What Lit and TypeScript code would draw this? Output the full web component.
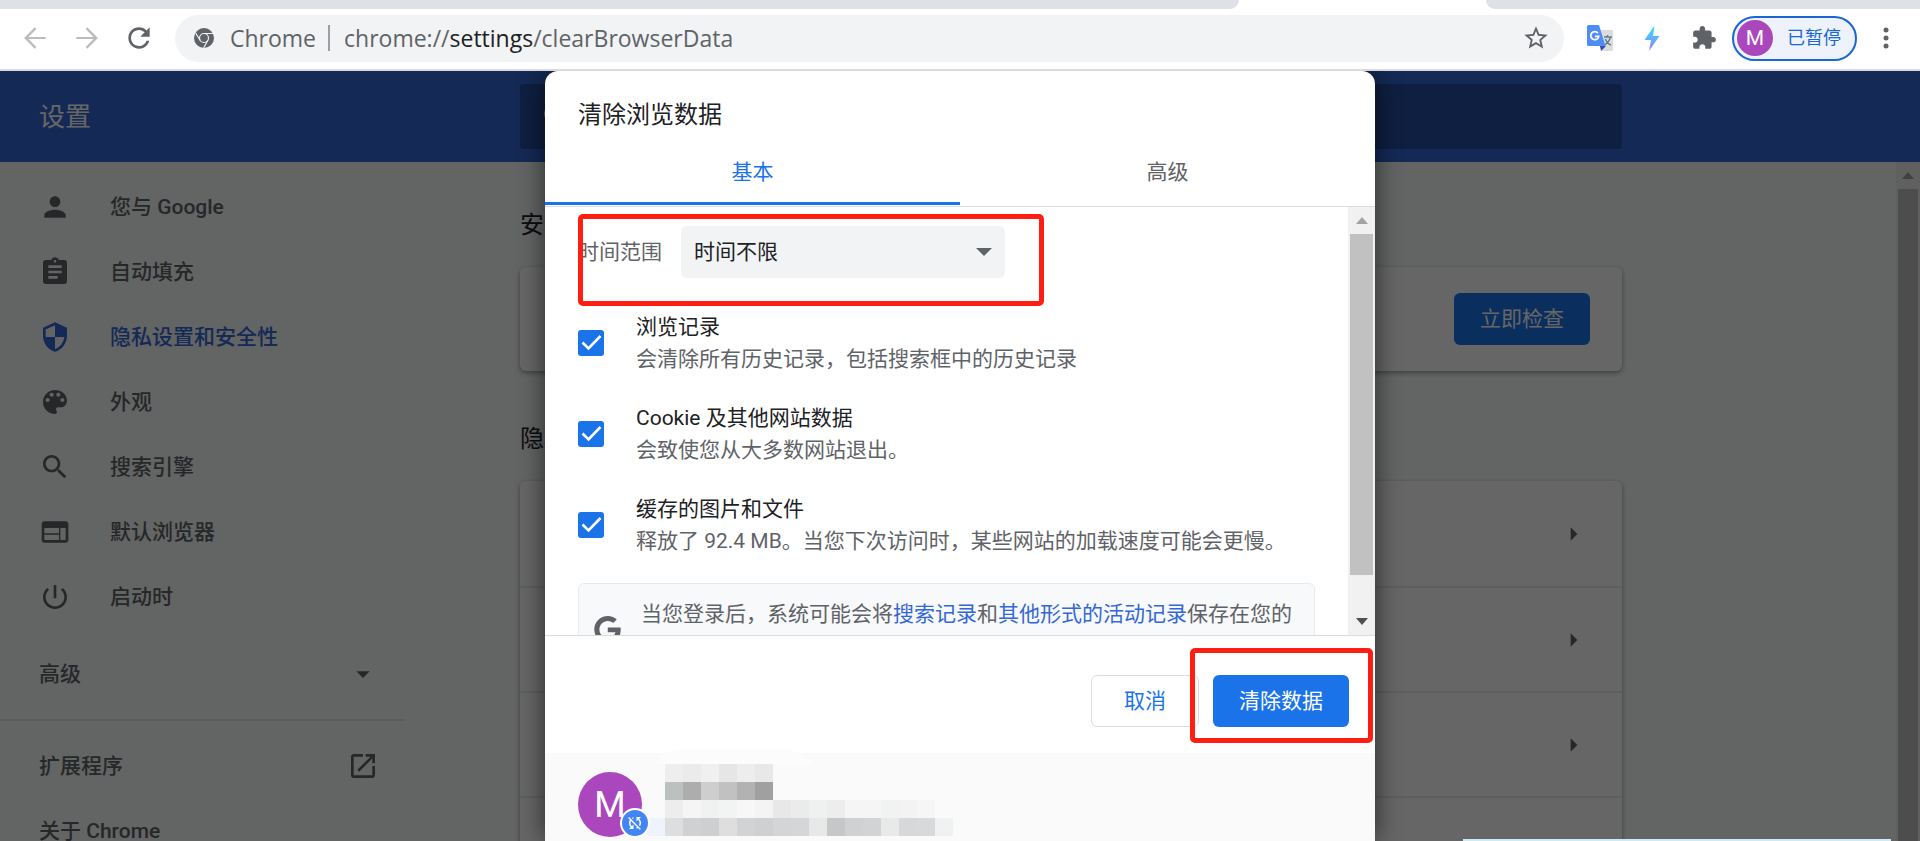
import { LitElement, html, css, svg } from "lit";
import { customElement, property } from "lit/decorators.js";

const ICONS: Record<string, string> = {
  person: "M12 12c2.21 0 4-1.79 4-4s-1.79-4-4-4-4 1.79-4 4 1.79 4 4 4zm0 2c-2.67 0-8 1.34-8 4v2h16v-2c0-2.66-5.33-4-8-4z",
  assignment: "M19 3h-4.18C14.4 1.84 13.3 1 12 1c-1.3 0-2.4.84-2.82 2H5c-1.1 0-2 .9-2 2v14c0 1.1.9 2 2 2h14c1.1 0 2-.9 2-2V5c0-1.1-.9-2-2-2zm-7 0c.55 0 1 .45 1 1s-.45 1-1 1-1-.45-1-1 .45-1 1-1zm2 14H7v-2h7v2zm3-4H7v-2h10v2zm0-4H7V7h10v2z",
  security: "M12 1L3 5v6c0 5.55 3.84 10.74 9 12 5.16-1.26 9-6.45 9-12V5l-9-4zm0 10.99h7c-.53 4.12-3.28 7.79-7 8.94V12H5V6.3l7-3.11v8.8z",
  palette: "M12 3c-4.97 0-9 4.03-9 9s4.03 9 9 9c.83 0 1.5-.67 1.5-1.5 0-.39-.15-.74-.39-1.01-.23-.26-.38-.61-.38-.99 0-.83.67-1.5 1.5-1.5H16c2.76 0 5-2.24 5-5 0-4.42-4.03-8-9-8zm-5.5 9c-.83 0-1.5-.67-1.5-1.5S5.67 9 6.5 9 8 9.67 8 10.5 7.33 12 6.5 12zm3-4C8.67 8 8 7.33 8 6.5S8.67 5 9.5 5s1.5.67 1.5 1.5S10.33 8 9.5 8zm5 0c-.83 0-1.5-.67-1.5-1.5S13.67 5 14.5 5s1.5.67 1.5 1.5S15.33 8 14.5 8zm3 4c-.83 0-1.5-.67-1.5-1.5S16.67 9 17.5 9s1.5.67 1.5 1.5-.67 1.5-1.5 1.5z",
  search: "M15.5 14h-.79l-.28-.27C15.41 12.59 16 11.11 16 9.5 16 5.91 13.09 3 9.5 3S3 5.91 3 9.5 5.91 16 9.5 16c1.61 0 3.09-.59 4.23-1.57l.27.28v.79l5 4.99L20.49 19l-4.99-5zm-6 0C7.01 14 5 11.99 5 9.5S7.01 5 9.5 5 14 7.01 14 9.5 11.99 14 9.5 14z",
  web: "M20 4H4c-1.1 0-1.99.9-1.99 2L2 18c0 1.1.9 2 2 2h16c1.1 0 2-.9 2-2V6c0-1.1-.9-2-2-2zm-5 14H4v-4h11v4zm0-5H4V9h11v4zm5 5h-4V9h4v9z",
  power: "M13 3h-2v10h2V3zm4.83 2.17l-1.42 1.42C17.99 7.86 19 9.81 19 12c0 3.87-3.13 7-7 7s-7-3.13-7-7c0-2.19 1.01-4.14 2.58-5.42L6.17 5.17C4.23 6.82 3 9.26 3 12c0 4.97 4.03 9 9 9s9-4.03 9-9c0-2.74-1.23-5.18-3.17-6.83z",
  launch: "M19 19H5V5h7V3H5c-1.11 0-2 .9-2 2v14c0 1.1.89 2 2 2h14c1.1 0 2-.9 2-2v-7h-2v7zM14 3v2h3.59l-9.83 9.83 1.41 1.41L19 6.41V10h2V3h-7z",
  extension: "M20.5 11H19V7c0-1.1-.9-2-2-2h-4V3.5C13 2.12 11.88 1 10.5 1S8 2.12 8 3.5V5H4c-1.1 0-1.99.9-1.99 2v3.8H3.5c1.49 0 2.7 1.21 2.7 2.7s-1.21 2.7-2.7 2.7H2V20c0 1.1.9 2 2 2h3.8v-1.5c0-1.49 1.21-2.7 2.7-2.7 1.49 0 2.7 1.21 2.7 2.7V22H17c1.1 0 2-.9 2-2v-4h1.5c1.38 0 2.5-1.12 2.5-2.5S21.88 11 20.5 11z",
  star: "M22 9.24l-7.19-.62L12 2 9.19 8.63 2 9.24l5.46 4.73L5.82 21 12 17.27 18.18 21l-1.63-7.03L22 9.24zM12 15.4l-3.76 2.27 1-4.28-3.32-2.88 4.38-.38L12 6.1l1.71 4.04 4.38.38-3.32 2.88 1 4.28L12 15.4z",
  back: "M20 11.2H7.1l5.9-5.9L11.8 4l-8 8 8 8 1.2-1.3-5.9-5.9H20z",
  forward: "M4 11.2h12.9L11 5.3 12.2 4l8 8-8 8-1.2-1.3 5.9-5.9H4z",
  reload: "M17.65 6.35C16.2 4.9 14.21 4 12 4c-4.42 0-7.99 3.58-7.99 8s3.57 8 7.99 8c3.73 0 6.84-2.55 7.73-6h-2.08c-.82 2.33-3.04 4-5.65 4-3.31 0-6-2.69-6-6s2.69-6 6-6c1.66 0 3.14.69 4.22 1.78L13 11h7V4l-2.35 2.35z",
  syncOff: "M10 6.35V4.26c-.8.21-1.55.54-2.23.96l1.46 1.46c.25-.12.5-.24.77-.33zm-7.14-.94l2.36 2.36C4.45 8.99 4 10.44 4 12c0 2.21.91 4.2 2.36 5.64L4 20h6v-6l-2.24 2.24C6.68 15.15 6 13.66 6 12c0-1 .25-1.94.68-2.77l8.08 8.08c-.25.13-.5.25-.77.34v2.09c.8-.21 1.55-.54 2.23-.96l2.36 2.36 1.27-1.27L4.14 4.14 2.86 5.41zM20 4h-6v6l2.24-2.24C17.32 8.85 18 10.34 18 12c0 1-.25 1.94-.68 2.77l1.46 1.46C19.55 15.01 20 13.56 20 12c0-2.21-.91-4.2-2.36-5.64L20 4z",
  down: "M7 10l5 5 5-5z",
  right: "M9.5 7l5 5-5 5z",
  google: "M12.24 10.285V14.4h6.806c-.275 1.765-2.056 5.174-6.806 5.174-4.095 0-7.439-3.389-7.439-7.574s3.345-7.574 7.439-7.574c2.33 0 3.891.989 4.785 1.849l3.254-3.138C18.189 1.186 15.479 0 12.24 0c-6.635 0-12 5.365-12 12s5.365 12 12 12c6.926 0 11.52-4.869 11.52-11.726 0-.788-.085-1.39-.189-1.989H12.24z",
};

const icon = (name: string, size = 32) => html`<svg
  width=${size} height=${size} viewBox="0 0 24 24" fill="currentColor" aria-hidden="true"
><path d=${ICONS[name]}></path></svg>`;

const base = css`
  * { box-sizing: border-box; }
  svg { display: block; flex: none; }
  button, select, input { font: inherit; color: inherit; margin: 0; }
  button { border: 0; background: none; padding: 0; cursor: pointer; }
  a { color: inherit; text-decoration: none; }
`;

@customElement("browser-toolbar")
class BrowserToolbar extends LitElement {
  static styles = [base, css`
    :host { display: block; flex: none; }
    .strip { display: flex; height: 9px; background: #fff; }
    .strip-left { flex: 1; background: #dee1e6; border-bottom-right-radius: 9px; }
    .strip-tab { width: 247px; }
    .strip-right { width: 434px; background: #dee1e6; border-bottom-left-radius: 9px; }
    .bar {
      display: flex; align-items: center; height: 62px; padding: 0 8px 2px 9px;
      background: #fff; border-bottom: 2px solid #d9dbdb; color: #5f6368;
    }
    .tool { display: flex; justify-content: center; align-items: center; width: 52px; height: 44px; }
    .off { color: #babcbe; }
    .omnibox {
      flex: 1; display: flex; align-items: center; height: 47px; margin: 0 10px;
      padding: 0 14px 0 19px; border-radius: 24px; background: #f1f3f4;
      font: 23px/32px "Open Sans", "Noto Sans", sans-serif; color: #5f6368;
    }
    .site { margin-left: 16px; }
    .rule { width: 2px; height: 26px; margin: 0 14px 0 12px; background: #9aa0a6; }
    .url { flex: 1; }
    .url b { font-weight: 400; color: #202124; }
    .profile {
      display: flex; align-items: center; gap: 14px; height: 45px; margin: 0 3px 0 2px; padding: 0 14px 0 3px;
      border: 2px solid #1a66d2; border-radius: 23px; background: #edf2fb;
      font: 18px/24px Roboto, "Noto Sans CJK SC", sans-serif; color: #1a66d2;
    }
    .avatar {
      display: flex; align-items: center; justify-content: center; width: 36px; height: 36px;
      border-radius: 50%; background: #ab47bc; color: #fff; font-size: 21px;
    }
  `];

  render() {
    return html`
      <div class="strip"><div class="strip-left"></div><div class="strip-tab"></div><div class="strip-right"></div></div>
      <div class="bar">
        <button class="tool off" aria-label="后退">${icon("back")}</button>
        <button class="tool off" aria-label="前进">${icon("forward")}</button>
        <button class="tool" aria-label="重新加载">${icon("reload")}</button>
        <div class="omnibox">
          <svg width="20" height="20" viewBox="0 0 20 20" aria-hidden="true">
            <circle cx="10" cy="10" r="10" fill="#5f6368"></circle>
            <g fill="none" stroke="#f1f3f4" stroke-width="1.2">
              <circle cx="10" cy="10" r="4.5"></circle>
              <path d="M10 5.5h9M6.1 12.2L1.6 5M13.9 12.2L9.6 20"></path>
            </g>
          </svg>
          <span class="site">Chrome</span><span class="rule"></span>
          <span class="url">chrome://<b>settings</b>/clearBrowserData</span>
          <button aria-label="收藏">${icon("star", 28)}</button>
        </div>
        <button class="tool" aria-label="翻译">
          <svg width="28" height="28" viewBox="0 0 28 28" aria-hidden="true">
            <path d="M13 6h12.500a1.500 1.500 0 0 1 1.500 1.500v18a1.500 1.500 0 0 1-1.500 1.500H16z" fill="#dcdcdc"></path>
            <path d="M18 13h8M21.500 11v2M24.500 13c-1 4-3 6-6 8M19.500 15c1 3 2.500 5 5.500 6" stroke="#607d8b" stroke-width="1.400" fill="none"></path>
            <path d="M14 22h6l-5 5z" fill="#3749ab"></path>
            <path d="M2.500 1H13l6.500 21h-17A1.500 1.500 0 0 1 1 20.500v-18A1.500 1.500 0 0 1 2.500 1z" fill="#4f8df6"></path>
            <path d="M12 9.300A4 4 0 1 0 12.700 12.300H9" stroke="#fff" stroke-width="1.800" fill="none"></path>
          </svg>
        </button>
        <button class="tool" aria-label="闪电">
          <svg width="28" height="28" viewBox="0 0 28 28" aria-hidden="true">
            <defs><linearGradient id="bolt" x1="0" y1="0" x2="0" y2="1">
              <stop offset="0" stop-color="#1ee8f7"></stop><stop offset="1" stop-color="#a77bff"></stop>
            </linearGradient></defs>
            <path d="M16.500 1.500L6.500 16H13l-2 11 10.500-15H15z" fill="url(#bolt)"></path>
          </svg>
        </button>
        <button class="tool" aria-label="扩展程序">${icon("extension", 26)}</button>
        <button class="profile"><span class="avatar">M</span>已暂停</button>
        <button class="tool" aria-label="菜单">
          <svg width="6" height="24" viewBox="0 0 6 24" fill="currentColor" aria-hidden="true">
            <circle cx="3" cy="4" r="2.500"></circle><circle cx="3" cy="12" r="2.500"></circle><circle cx="3" cy="20" r="2.500"></circle>
          </svg>
        </button>
      </div>`;
  }
}

@customElement("scroll-rail")
class ScrollRail extends LitElement {
  @property({ type: Number }) thumb = 1;
  @property({ type: Boolean }) open = false;
  static styles = [base, css`
    :host { display: flex; flex-direction: column; flex: none; background: #f1f1f1; }
    .end { display: flex; justify-content: center; align-items: center; height: 27px; color: #a3a3a3; }
    .low { color: #505050; }
    .track { flex: 1; padding: 0 2px; }
    .thumb { background: #c1c1c1; }
  `];
  render() {
    return html`
      <div class="end"><svg width="12" height="7" viewBox="0 0 12 7"><path d="M0 7l6-7 6 7z" fill="currentColor"></path></svg></div>
      <div class="track"><div class="thumb" style="height:${this.thumb * 100}%"></div></div>
      ${this.open ? "" : html`<div class="end low"><svg width="12" height="7" viewBox="0 0 12 7"><path d="M0 0l6 7 6-7z" fill="currentColor"></path></svg></div>`}`;
  }
}

const NAV = [
  ["person", "您与 Google"],
  ["assignment", "自动填充"],
  ["security", "隐私设置和安全性"],
  ["palette", "外观"],
  ["search", "搜索引擎"],
  ["web", "默认浏览器"],
  ["power", "启动时"],
];

@customElement("settings-page")
class SettingsPage extends LitElement {
  static styles = [base, css`
    :host {
      display: flex; flex-direction: column; height: 100%; background: #f8faf9;
      font: 21px/32px Roboto, "Noto Sans CJK SC", sans-serif; color: #5f6368;
    }
    .header { display: flex; align-items: center; flex: none; height: 91px; padding: 0 298px 0 39px; background: #3367d6; color: #fff; }
    .title { width: 481px; margin: 0; font-size: 26px; font-weight: 400; }
    .search { flex: 1; display: flex; align-items: center; height: 65px; padding: 0 20px; border-radius: 4px; background: #274ea3; }
    .search input { flex: 1; border: 0; outline: 0; background: none; }
    .body { flex: 1; display: flex; min-height: 0; overflow: hidden; }
    .side { flex: none; width: 405px; padding-top: 12px; font-weight: 500; color: #5f6368; }
    .side a, .more { display: flex; align-items: center; width: 100%; height: 65px; padding: 0 26px 0 39px; }
    .side .plain { justify-content: space-between; }
    .nav a { gap: 39px; }
    .nav .current { color: #3367d6; }
    .more { justify-content: space-between; margin: 12px 0 13px; font-weight: 500; }
    .foot { padding-top: 12px; border-top: 2px solid #e4e6e5; }
    .main { flex: 1; padding: 47px 274px 0 115px; }
    h2 { margin: 0 0 26px; font-size: 24px; line-height: 32px; font-weight: 400; color: #202124; }
    .card { margin-bottom: 52px; border-radius: 6px; background: #fff; box-shadow: 0 2px 5px rgba(60, 64, 67, .5); }
    .check { display: flex; justify-content: flex-end; align-items: center; height: 104px; padding: 0 32px; }
    .check button { height: 52px; padding: 0 26px; border-radius: 6px; background: #1a73e8; color: #fff; }
    .row { display: flex; justify-content: flex-end; align-items: center; width: 100%; height: 105px; padding: 0 32px; }
    .row + .row { border-top: 2px solid #e9ebea; }
    scroll-rail { width: 24px; }
  `];

  render() {
    return html`
      <header class="header">
        <h1 class="title">设置</h1>
        <div class="search">${icon("search")}<input type="search" aria-label="在设置中搜索" /></div>
      </header>
      <div class="body">
        <aside class="side">
          <nav class="nav">
            ${NAV.map(([glyph, label], i) => html`<a href="#" class=${i === 2 ? "current" : ""}>${icon(glyph)}<span>${label}</span></a>`)}
          </nav>
          <button class="more"><span>高级</span>${icon("down")}</button>
          <div class="foot">
            <a class="plain" href="#"><span>扩展程序</span>${icon("launch")}</a>
            <a class="plain" href="#"><span>关于 Chrome</span></a>
          </div>
        </aside>
        <main class="main">
          <h2>安全检查</h2>
          <div class="card check"><button>立即检查</button></div>
          <h2>隐私设置和安全性</h2>
          <div class="card">
            ${["清除浏览数据", "Cookie 及其他网站数据", "安全", "网站设置"].map((name) => html`<button class="row" aria-label=${name}>${icon("right")}</button>`)}
          </div>
        </main>
        <scroll-rail open .thumb=${1}></scroll-rail>
      </div>`;
  }
}

const DATA_TYPES = [
  ["浏览记录", "会清除所有历史记录，包括搜索框中的历史记录"],
  ["Cookie 及其他网站数据", "会致使您从大多数网站退出。"],
  ["缓存的图片和文件", "释放了 92.4 MB。当您下次访问时，某些网站的加载速度可能会更慢。"],
];

// Pixelated name and address, one string of colours per row of 18px tiles.
const TILES = [
  ", eeeeee,ebebeb,f0f0f0,e6e6e6,ededed,e8e8e8",
  ",bcc0be,adadad,cecece,c1c1c1,b2b2b2,a0a0a0",
  ",ededed,f5f5f5,f0f2f1,f2f3f3,f7f7f7,f4f4f4,e8e8e8,ebebeb,eef1f0,ededed,f5f5f5,f5f5f5,f1f2f2,f3f3f3,f6f6f6",
  "eff3fb,dddee0,d0d1d3,cdcfd0,dededf,d2d3d5,cfd0d2,d4d5d7,d5d6d8,e7e9e8,c6c7c9,d0d1d3,d2d3d5,e8eae9,d7d8da,d8d9db,f0f2f1",
].map((row) => row.split(",").map((c) => c.trim()));

@customElement("clear-dialog")
class ClearDialog extends LitElement {
  static styles = [base, css`
    :host {
      display: flex; flex-direction: column; background: #fff; border-radius: 13px 13px 0 0;
      box-shadow: 0 0 26px rgba(0, 0, 0, .6);
      font: 21px/32px Roboto, "Noto Sans CJK SC", sans-serif; color: #202124;
    }
    h2 { margin: 0; padding: 28px 33px 0; font-size: 24px; line-height: 32px; font-weight: 400; }
    .tabs { display: flex; padding-bottom: 1px; border-bottom: 1px solid #dcdcdc; }
    .tab { flex: 1; height: 74px; padding-top: 10px; border-bottom: 3px solid transparent; color: #5f6368; }
    .tab.active { border-color: #1a73e8; color: #1a73e8; }
    .body { display: flex; max-height: 429px; overflow: hidden; border-bottom: 1px solid #dcdcdc; }
    .content { flex: 1; height: max-content; padding: 19px 33px 26px; }
    .range { display: flex; align-items: center; gap: 19px; margin-bottom: 33px; color: #5f6368; }
    .pick { display: grid; align-items: center; width: 324px; color: #5f6368; }
    .pick > * { grid-area: 1 / 1; }
    .pick select {
      appearance: none; height: 52px; padding: 0 13px; border: 0; border-radius: 6px;
      background: #f1f3f4; color: #202124;
    }
    .pick svg { justify-self: end; margin-right: 4px; pointer-events: none; }
    .types { display: grid; gap: 27px; margin-bottom: 26px; }
    .type { display: flex; align-items: center; gap: 32px; }
    .box { display: grid; flex: none; }
    .box > * { grid-area: 1 / 1; }
    .box input { appearance: none; width: 26px; height: 26px; border-radius: 3px; background: #fff; border: 2px solid #5f6368; }
    .box input:checked { background: #1a73e8; border: 0; }
    .box svg { pointer-events: none; }
    .name, .note { display: block; }
    .note { color: #5f6368; }
    .info {
      display: grid; grid-template-columns: auto 1fr; align-items: center; gap: 20px; height: 92px; padding: 14px 20px 14px 15px;
      border: 1px solid #e8eaed; border-radius: 6px; background: #f8f9fb; color: #5f6368;
    }
    .info a { color: #3367d6; }
    .info p { display: flex; align-self: start; margin: 0; white-space: nowrap; }
    scroll-rail { width: 27px; }
    .actions { display: flex; justify-content: flex-end; gap: 14px; padding: 39px 26px 26px; }
    .actions button { height: 52px; border-radius: 6px; }
    .actions .cancel { padding: 0 32px; border: 1px solid #dadce0; color: #1a73e8; }
    .actions .confirm { padding: 0 26px; background: #1a73e8; color: #fff; }
    .account { flex: 1; display: flex; align-items: flex-start; gap: 5px; padding: 11px 33px 0; background: #fafafa; }
    .avatar {
      position: relative; display: flex; justify-content: center; align-items: center; flex: none;
      width: 64px; height: 65px; margin-top: 8px; border-radius: 50%;
      background: #ab47bc; color: #fff; font-size: 36px;
    }
    .badge {
      position: absolute; right: -8px; bottom: -1px; display: flex; justify-content: center; align-items: center;
      width: 30px; height: 30px; border: 2px solid #fff; border-radius: 50%; background: #4285f4;
    }
    .tiles { overflow: visible; }
    .mark { position: absolute; border: 5px solid #ff1f12; border-radius: 5px; pointer-events: none; }
    .mark-range { left: 33px; top: 143px; width: 466px; height: 92px; }
    .mark-confirm { right: 2px; top: 577px; width: 183px; height: 95px; }
  `];

  render() {
    return html`
      <h2>清除浏览数据</h2>
      <div class="tabs" role="tablist">
        <button class="tab active" role="tab" aria-selected="true">基本</button>
        <button class="tab" role="tab" aria-selected="false">高级</button>
      </div>
      <div class="body">
        <div class="content">
          <div class="range">
            <label for="range">时间范围</label>
            <div class="pick">
              <select id="range"><option>时间不限</option></select>
              <svg width="34" height="34" viewBox="0 0 34 34" aria-hidden="true"><path d="M9 13h16l-8 8z" fill="currentColor"></path></svg>
            </div>
          </div>
          <div class="types">
            ${DATA_TYPES.map(([name, note], i) => html`<div class="type">
              <span class="box">
                <input type="checkbox" id="type-${i}" checked />
                <svg width="26" height="26" viewBox="0 0 26 26" aria-hidden="true"><path d="M4.500 12.500l6 6L22.500 6" fill="none" stroke="#fff" stroke-width="2.600"></path></svg>
              </span>
              <label for="type-${i}"><span class="name">${name}</span><span class="note">${note}</span></label>
            </div>`)}
          </div>
          <div class="info">
            ${icon("google", 27)}
            <p><span>当您登录后，系统可能会将</span><a href="#">搜索记录</a><span>和</span><a href="#">其他形式的活动记录</a><span>保存在您的</span></p>
          </div>
        </div>
        <scroll-rail .thumb=${341 / 374}></scroll-rail>
      </div>
      <div class="actions">
        <button class="cancel">取消</button>
        <button class="confirm">清除数据</button>
      </div>
      <div class="account">
        <div class="avatar">M<span class="badge">${icon("syncOff", 18)}</span></div>
        <svg class="tiles" width="306" height="72" viewBox="0 0 306 72" aria-hidden="true">
          <path d="M8 0C18-10 22-15 40-15h92c18 0 22 5 37 15z" fill="#fcfcfc"></path>
          ${TILES.map((row, y) => row.map((c, x) => c ? svg`<rect x=${x * 18} y=${y * 18} width="18" height="18" fill=${"#" + c}></rect>` : ""))}
        </svg>
      </div>
      <div class="mark mark-range"></div>
      <div class="mark mark-confirm"></div>`;
  }
}

@customElement("app-root")
class AppRoot extends LitElement {
  static styles = [base, css`
    :host { display: flex; flex-direction: column; height: 100vh; overflow: hidden; }
    .view { position: relative; flex: 1; min-height: 0; overflow: hidden; }
    .shade { position: absolute; inset: 0; background: rgba(0, 0, 0, .6); }
    .dialog { position: absolute; top: 0; bottom: 0; left: 0; right: 0; width: 830px; margin: 0 auto; }
    .toast { position: absolute; right: 29px; bottom: 0; width: 428px; height: 2px; background: #cdeaf5; }
  `];

  render() {
    return html`
      <browser-toolbar></browser-toolbar>
      <div class="view">
        <settings-page></settings-page>
        <div class="shade"></div>
        <clear-dialog class="dialog" role="dialog" aria-label="清除浏览数据"></clear-dialog>
        <div class="toast"></div>
      </div>`;
  }
}
